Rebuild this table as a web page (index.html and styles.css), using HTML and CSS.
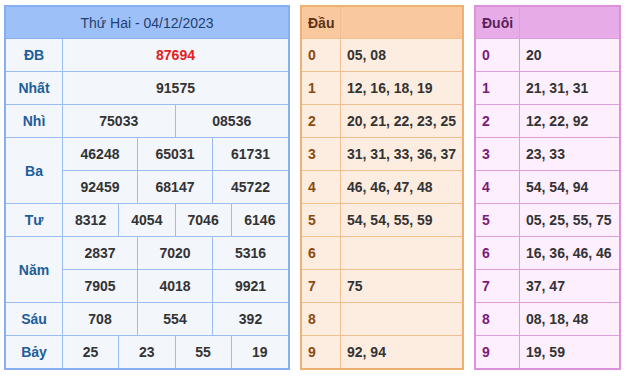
FILE: index.html
```html
<!DOCTYPE html>
<html lang="vi">
<head>
    <meta charset="UTF-8">
    <meta name="viewport" content="width=device-width, initial-scale=1.0">
    <title>Kết quả xổ số</title>
    <link rel="stylesheet" href="styles.css">
</head>
<body>
    <div class="wrap">
        <table class="kq">
            <colgroup>
                <col class="col-label">
                <col><col><col><col><col><col><col><col><col><col><col><col>
            </colgroup>
            <thead>
                <tr>
                    <th colspan="13">Thứ Hai - 04/12/2023</th>
                </tr>
            </thead>
            <tbody>
                <tr>
                    <td class="label">ĐB</td>
                    <td colspan="12" class="db">87694</td>
                </tr>
                <tr>
                    <td class="label">Nhất</td>
                    <td colspan="12">91575</td>
                </tr>
                <tr>
                    <td class="label">Nhì</td>
                    <td colspan="6">75033</td>
                    <td colspan="6">08536</td>
                </tr>
                <tr>
                    <td class="label" rowspan="2">Ba</td>
                    <td colspan="4">46248</td>
                    <td colspan="4">65031</td>
                    <td colspan="4">61731</td>
                </tr>
                <tr>
                    <td colspan="4">92459</td>
                    <td colspan="4">68147</td>
                    <td colspan="4">45722</td>
                </tr>
                <tr>
                    <td class="label">Tư</td>
                    <td colspan="3">8312</td>
                    <td colspan="3">4054</td>
                    <td colspan="3">7046</td>
                    <td colspan="3">6146</td>
                </tr>
                <tr>
                    <td class="label" rowspan="2">Năm</td>
                    <td colspan="4">2837</td>
                    <td colspan="4">7020</td>
                    <td colspan="4">5316</td>
                </tr>
                <tr>
                    <td colspan="4">7905</td>
                    <td colspan="4">4018</td>
                    <td colspan="4">9921</td>
                </tr>
                <tr>
                    <td class="label">Sáu</td>
                    <td colspan="4">708</td>
                    <td colspan="4">554</td>
                    <td colspan="4">392</td>
                </tr>
                <tr>
                    <td class="label">Bảy</td>
                    <td colspan="3">25</td>
                    <td colspan="3">23</td>
                    <td colspan="3">55</td>
                    <td colspan="3">19</td>
                </tr>
            </tbody>
        </table>

        <table class="loto dau">
            <colgroup>
                <col class="col-key">
                <col>
            </colgroup>
            <thead>
                <tr><th>Đầu</th><th></th></tr>
            </thead>
            <tbody>
                <tr><td class="key">0</td><td>05, 08</td></tr>
                <tr><td class="key">1</td><td>12, 16, 18, 19</td></tr>
                <tr><td class="key">2</td><td>20, 21, 22, 23, 25</td></tr>
                <tr><td class="key">3</td><td>31, 31, 33, 36, 37</td></tr>
                <tr><td class="key">4</td><td>46, 46, 47, 48</td></tr>
                <tr><td class="key">5</td><td>54, 54, 55, 59</td></tr>
                <tr><td class="key">6</td><td></td></tr>
                <tr><td class="key">7</td><td>75</td></tr>
                <tr><td class="key">8</td><td></td></tr>
                <tr><td class="key">9</td><td>92, 94</td></tr>
            </tbody>
        </table>

        <table class="loto duoi">
            <colgroup>
                <col class="col-key">
                <col>
            </colgroup>
            <thead>
                <tr><th>Đuôi</th><th></th></tr>
            </thead>
            <tbody>
                <tr><td class="key">0</td><td>20</td></tr>
                <tr><td class="key">1</td><td>21, 31, 31</td></tr>
                <tr><td class="key">2</td><td>12, 22, 92</td></tr>
                <tr><td class="key">3</td><td>23, 33</td></tr>
                <tr><td class="key">4</td><td>54, 54, 94</td></tr>
                <tr><td class="key">5</td><td>05, 25, 55, 75</td></tr>
                <tr><td class="key">6</td><td>16, 36, 46, 46</td></tr>
                <tr><td class="key">7</td><td>37, 47</td></tr>
                <tr><td class="key">8</td><td>08, 18, 48</td></tr>
                <tr><td class="key">9</td><td>19, 59</td></tr>
            </tbody>
        </table>
    </div>
</body>
</html>
```

FILE: styles.css
```css
body {
    font-family: "Liberation Sans", Arial, sans-serif;
    background-color: #fff;
    margin: 0;
    padding: 0;
}

.wrap {
    display: flex;
    align-items: flex-start;
    gap: 10px;
    padding: 5px 0 0 4px;
}

table {
    border-collapse: separate;
    border-spacing: 0;
    table-layout: fixed;
    font-size: 14px;
}

th, td {
    height: 32px;
    padding: 0;
    box-sizing: border-box;
}

/* bảng kết quả */
.kq {
    width: 286px;
    border: 2px solid #86aef0;
    background-color: #f3f6fb;
}

.kq .col-label {
    width: 57px;
}

.kq th {
    background-color: #9ec0f8;
    color: #1e3f70;
    font-weight: normal;
    height: 32px;
    border-bottom: 1px solid #86aef0;
}

.kq td {
    text-align: center;
    font-weight: bold;
    color: #333;
    height: 33px;
    border-right: 1px solid #9dbdf2;
    border-bottom: 1px solid #9dbdf2;
}

.kq td:last-child {
    border-right: none;
}

.kq tbody tr:last-child td {
    border-bottom: none;
    height: 32px;
}

.kq td.label {
    color: #1d5d99;
}

.kq td.db {
    color: #e3201c;
}

/* bảng đầu - đuôi */
.loto th,
.loto td {
    text-align: left;
    font-weight: bold;
    padding-left: 6px;
    height: 33px;
    border-right: 1px solid;
    border-bottom: 1px solid;
}

.loto th {
    height: 32px;
}

.loto th:last-child,
.loto td:last-child {
    border-right: none;
}

.loto tbody tr:last-child td {
    border-bottom: none;
    height: 32px;
}

.loto td {
    color: #333;
}

.dau {
    width: 164px;
    border: 2px solid #efb172;
    background-color: #fdede1;
}

.dau .col-key {
    width: 39px;
}

.dau th {
    background-color: #f9c89e;
    color: #5a3315;
}

.dau th, .dau td {
    border-color: #f0bf8f;
}

.dau td.key {
    color: #8c4a0c;
}

.duoi {
    width: 147px;
    border: 2px solid #db92db;
    background-color: #fdeffd;
}

.duoi .col-key {
    width: 44px;
}

.duoi th {
    background-color: #e7ace7;
    color: #5a1f5a;
}

.duoi th, .duoi td {
    border-color: #dc9fdc;
}

.duoi td.key {
    color: #7c1a7c;
}
```
